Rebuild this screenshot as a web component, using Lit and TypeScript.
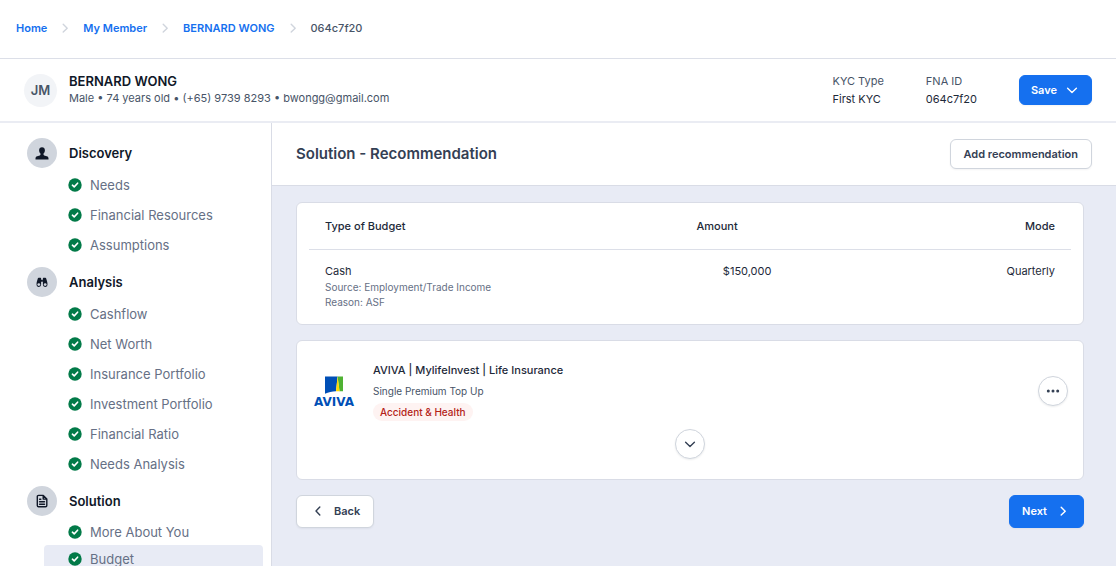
import { LitElement, html, css, svg } from "lit";
import { customElement, property } from "lit/decorators.js";
import { classMap } from "lit/directives/class-map.js";

type Glyph = "person" | "binoculars" | "document";

interface Section {
  title: string;
  glyph: Glyph;
  items: string[];
  compact?: boolean;
}

const SECTIONS: Section[] = [
  { title: "Discovery", glyph: "person", items: ["Needs", "Financial Resources", "Assumptions"] },
  {
    title: "Analysis",
    glyph: "binoculars",
    items: ["Cashflow", "Net Worth", "Insurance Portfolio", "Investment Portfolio", "Financial Ratio", "Needs Analysis"],
  },
  { title: "Solution", glyph: "document", items: ["More About You", "Budget"], compact: true },
];

const CURRENT = "Budget";

const chevron = (d: string) => html`
  <svg width="12" height="12" viewBox="0 0 12 12" fill="none" stroke="currentColor" stroke-width="1.4"
    stroke-linecap="round" stroke-linejoin="round" aria-hidden="true"><path d=${d}></path></svg>`;
const RIGHT = "M4.2 2.300 8.200 6.200 4.200 10.100";
const LEFT = "M7.8 2 4 6l3.800 4";
const DOWN = "M1.600 4.200 6 8.400 10.400 4.200";

const glyphs = {
  person: svg`<path fill="currentColor" d="M7 1.200c-1.800 0-2.900 1.200-2.900 3 0 1.400.6 2.700 1.400 3.400v.9c0 .4-.3.7-.7.900l-2.600.9C1.100 10.700.5 11.500.5 12.400v1h13v-1c0-.9-.6-1.700-1.700-2.100l-2.600-.9c-.4-.2-.7-.5-.7-.9v-.9c.8-.7 1.400-2 1.400-3.400 0-1.800-1.100-3-2.900-3z"/>`,
  binoculars: svg`<path fill="currentColor" d="M3.600 2.800h2c.3 0 .5.2.5.500v6.500a2.300 2.300 0 1 1-4.600-.3c0-2.100.8-4.300 1.400-6.200.1-.3.400-.5.700-.5zM10.400 2.800h-2c-.3 0-.5.2-.5.500v6.500a2.300 2.300 0 1 0 4.600-.3c0-2.100-.8-4.300-1.400-6.200-.1-.3-.4-.5-.7-.5zM6 4.800h2v2H6z"/>
    <circle cx="3.800" cy="9.600" r="1.400" fill="#d0d5dd"/><circle cx="10.200" cy="9.600" r="1.400" fill="#d0d5dd"/>`,
  document: svg`<path fill="none" stroke="currentColor" stroke-width="1.400" stroke-linejoin="round" stroke-linecap="round"
    d="M3.500 1.400h4.800l3.500 3.500v6.600c0 .7-.5 1.200-1.200 1.200H3.500c-.7 0-1.200-.5-1.200-1.200V2.600c0-.7.500-1.200 1.200-1.200zM8.200 1.600v3.500h3.500M4.600 5.200h1.200M4.600 7.700h4.900M4.600 10.200h4.900"/>`,
};

@customElement("side-nav")
class SideNav extends LitElement {
  @property({ attribute: false }) sections: Section[] = [];
  @property() current = "";

  static styles = css`
    :host {
      display: block;
      box-sizing: border-box;
      border-right: 1px solid #d9dce6;
      background: #fff;
      padding: 15px 8px 0 27px;
      overflow-y: auto;
      scrollbar-width: none;
    }
    .section + .section { margin-top: 7px; }
    .heading {
      display: flex;
      align-items: center;
      gap: 12px;
      margin: 0 0 2px;
      font-size: 13px;
      line-height: 16px;
      font-weight: 600;
      color: #101828;
    }
    .disc {
      display: grid;
      place-items: center;
      width: 30px;
      height: 30px;
      border-radius: 50%;
      background: #d0d5dd;
    }
    .list { list-style: none; margin: 0; padding: 0 0 0 17px; }
    .link {
      display: flex;
      align-items: center;
      gap: 8px;
      height: 30px;
      padding-left: 24px;
      border-radius: 4px;
      font-size: 13px;
      line-height: 16px;
      color: #667085;
      text-decoration: none;
    }
    .compact .link { height: 27px; }
    .link.current { background: #e8ebf5; }
  `;

  render() {
    return html`<nav aria-label="Steps">
      ${this.sections.map(
        (s) => html`<section class=${classMap({ section: true, compact: !!s.compact })}>
          <h2 class="heading">
            <span class="disc"><svg width="14" height="14" viewBox="0 0 14 14" aria-hidden="true">${glyphs[s.glyph]}</svg></span>
            ${s.title}
          </h2>
          <ul class="list">
            ${s.items.map(
              (name) => html`<li>
                <a class=${classMap({ link: true, current: name === this.current })} href="#">
                  <svg width="14" height="14" viewBox="0 0 14 14" aria-hidden="true">
                    <circle cx="7" cy="7" r="6.700" fill="#027a48"></circle>
                    <path d="M4.400 7.200 6.200 8.900 9.600 5.200" fill="none" stroke="#fff" stroke-width="1.600" stroke-linecap="round" stroke-linejoin="round"></path>
                  </svg>
                  ${name}
                </a>
              </li>`
            )}
          </ul>
        </section>`
      )}
    </nav>`;
  }
}

@customElement("app-root")
class AppRoot extends LitElement {
  static styles = css`
    :host {
      display: grid;
      grid-template-rows: auto auto minmax(0, 1fr);
      height: 100vh;
      font-family: Inter, "Liberation Sans", sans-serif;
      font-size: 11px;
      line-height: 16px;
      color: #344054;
      background: #fff;
    }
    * { box-sizing: border-box; }
    svg { display: block; flex: none; }
    button { font: inherit; cursor: pointer; }

    .crumbs {
      display: flex;
      align-items: center;
      gap: 12px;
      min-height: 59px;
      padding: 0 16px 2px;
      border-bottom: 1px solid #dcdfe8;
    }
    .crumb { color: #1570ef; font-weight: 600; text-decoration: none; }
    .here { color: #475467; font-weight: 500; }
    .sep { color: #d0d5dd; }

    .client {
      display: flex;
      align-items: center;
      min-height: 64px;
      padding: 0 24px;
      border-bottom: 2px solid #eaecf3;
    }
    .avatar {
      display: grid;
      place-items: center;
      width: 33px;
      height: 33px;
      margin-right: 12px;
      border-radius: 50%;
      background: #f2f4f7;
      color: #475467;
      font-size: 13px;
      font-weight: 600;
    }
    .who { flex: 1; padding-bottom: 2px; }
    .name { margin: 0; font-size: 13px; line-height: 18px; font-weight: 600; color: #101828; }
    .sub { margin: 0; color: #475467; }
    .facts { display: flex; gap: 42px; margin: 0 42px 0 0; }
    .fact dt { color: #475467; line-height: 18px; }
    .fact dd { margin: 0; color: #1d2939; line-height: 18px; }

    .btn {
      display: inline-flex;
      align-items: center;
      justify-content: center;
      border-radius: 6px;
      font-weight: 600;
      border: 1px solid #d0d5dd;
      background: #fff;
      color: #344054;
      padding: 0 13px;
      height: 30px;
      box-shadow: 0 1px 2px rgba(16, 24, 40, 0.05);
    }
    .btn.primary { background: #1570ef; border-color: #1570ef; color: #fff; }
    .btn.save { gap: 9px; padding: 0 13px 0 11px; }
    .btn.big { height: 33px; gap: 10px; padding: 0 14px 0 12px; }
    .btn.back { padding: 0 13px 0 15px; }

    .body { display: grid; grid-template-columns: 272px minmax(0, 1fr); min-height: 0; }
    .main { display: flex; flex-direction: column; background: #e8ebf5; min-height: 0; }
    .titlebar {
      display: flex;
      align-items: center;
      justify-content: space-between;
      min-height: 63px;
      padding: 0 24px;
      background: #fff;
      border-bottom: 1px solid #d9dce6;
    }
    .title { margin: 0; font-size: 15px; line-height: 20px; font-weight: 600; color: #344054; }
    .content { display: flex; flex-direction: column; gap: 15px; padding: 16px 32px 16px 24px; }
    .card {
      background: #fff;
      border: 1px solid #d9dce6;
      border-radius: 6px;
    }

    .budget { padding: 0 12px 14px; }
    .table { width: 100%; table-layout: fixed; border-collapse: collapse; color: #1d2939; }
    .table th { height: 46px; padding: 0 16px; font-weight: 500; text-align: left; border-bottom: 1px solid #dcdfe8; }
    .table td { padding: 12px 16px 0; line-height: 18px; vertical-align: top; }
    .table .kind { width: 45%; }
    .table .amount { width: 25%; text-align: center; }
    .table th.amount { padding-right: 76px; }
    .table .mode { text-align: right; }
    .note { display: block; font-size: 10px; line-height: 15px; color: #667085; }

    .product { display: grid; gap: 8px; padding: 20px 15px; }
    .row { display: flex; align-items: center; }
    .logo { display: grid; justify-items: center; width: 44px; margin-right: 17px; padding-top: 4px; }
    .brand { font-family: "DejaVu Sans", sans-serif; font-weight: 700; font-size: 12px; line-height: 16px; color: #004fb6; }
    .info { flex: 1; display: grid; justify-items: start; }
    .pname { margin: 0 0 3px; font-size: 11px; line-height: 18px; font-weight: 500; color: #1d2939; }
    .plan { margin: 0 0 3px; font-size: 10px; line-height: 18px; color: #475467; }
    .tag { padding: 0 7px; border-radius: 9px; background: #fef3f2; color: #b42318; font-size: 10px; line-height: 18px; font-weight: 500; }
    .round {
      display: grid;
      place-items: center;
      width: 30px;
      height: 30px;
      padding: 0;
      border: 1px solid #d0d5dd;
      border-radius: 50%;
      background: #fff;
      color: #344054;
      box-shadow: 0 1px 2px rgba(16, 24, 40, 0.08);
    }
    .toggle { justify-self: center; }
    .footer { display: flex; justify-content: space-between; }
  `;

  render() {
    return html`
      <nav class="crumbs" aria-label="Breadcrumb">
        ${["Home", "My Member", "BERNARD WONG"].map(
          (c) => html`<a class="crumb" href="#">${c}</a><span class="sep">${chevron(RIGHT)}</span>`
        )}
        <span class="here" aria-current="page">064c7f20</span>
      </nav>

      <header class="client">
        <span class="avatar">JM</span>
        <div class="who">
          <h1 class="name">BERNARD WONG</h1>
          <p class="sub">Male • 74 years old • (+65) 9739 8293 • bwongg@gmail.com</p>
        </div>
        <dl class="facts">
          <div class="fact"><dt>KYC Type</dt><dd>First KYC</dd></div>
          <div class="fact"><dt>FNA ID</dt><dd>064c7f20</dd></div>
        </dl>
        <button class="btn primary save" type="button">Save ${chevron(DOWN)}</button>
      </header>

      <div class="body">
        <side-nav .sections=${SECTIONS} current=${CURRENT}></side-nav>
        <main class="main">
          <div class="titlebar">
            <h2 class="title">Solution - Recommendation</h2>
            <button class="btn" type="button">Add recommendation</button>
          </div>
          <div class="content">
            <section class="card budget">
              <table class="table">
                <thead>
                  <tr>
                    <th class="kind" scope="col">Type of Budget</th>
                    <th class="amount" scope="col">Amount</th>
                    <th class="mode" scope="col">Mode</th>
                  </tr>
                </thead>
                <tbody>
                  <tr>
                    <td>Cash
                      <span class="note">Source: Employment/Trade Income</span>
                      <span class="note">Reason: ASF</span>
                    </td>
                    <td class="amount">$150,000</td>
                    <td class="mode">Quarterly</td>
                  </tr>
                </tbody>
              </table>
            </section>

            <section class="card product">
              <div class="row">
                <div class="logo">
                  <svg width="18" height="18" viewBox="0 0 18 18" aria-hidden="true">
                    <path fill="#004fb6" d="M0 .5h12.600L11 15.200C7 15.400 3.500 16.200 0 17.800z"></path>
                    <path fill="#4fb233" d="M12.600.5H18v14.700h-3.600z"></path>
                    <path fill="#ffd900" d="M12.600.5 14.600 15.200H11z"></path>
                  </svg>
                  <span class="brand">AVIVA</span>
                </div>
                <div class="info">
                  <h3 class="pname">AVIVA | MylifeInvest | Life Insurance</h3>
                  <p class="plan">Single Premium Top Up</p>
                  <span class="tag">Accident &amp; Health</span>
                </div>
                <button class="round" type="button" aria-label="More actions">
                  <svg width="14" height="14" viewBox="0 0 14 14" fill="currentColor" aria-hidden="true">
                    <circle cx="2.300" cy="7" r="1.500"></circle><circle cx="7" cy="7" r="1.500"></circle><circle cx="11.700" cy="7" r="1.500"></circle>
                  </svg>
                </button>
              </div>
              <button class="round toggle" type="button" aria-label="Show details">${chevron(DOWN)}</button>
            </section>

            <div class="footer">
              <button class="btn big back" type="button">${chevron(LEFT)} Back</button>
              <button class="btn big primary" type="button">Next ${chevron(RIGHT)}</button>
            </div>
          </div>
        </main>
      </div>
    `;
  }
}
